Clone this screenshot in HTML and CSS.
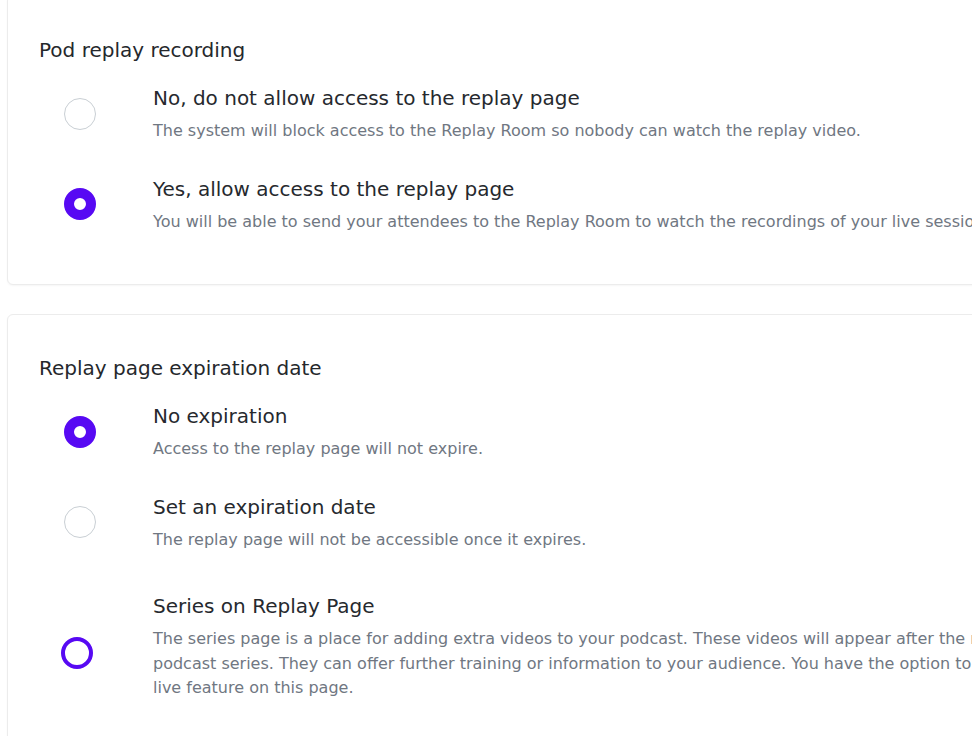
FILE: index.html
```html
<!DOCTYPE html>
<html lang="en">
<head>
<meta charset="utf-8">
<title>Replay settings</title>
<link rel="stylesheet" href="styles.css">
</head>
<body>
<main class="page">
  <section class="card card--first">
    <h2 class="card-title">Pod replay recording</h2>
    <div class="options">
      <label class="option">
        <span class="radio"></span>
        <span class="option-text">
          <span class="option-title">No, do not allow access to the replay page</span>
          <span class="option-desc">The system will block access to the Replay Room so nobody can watch the replay video.</span>
        </span>
      </label>
      <label class="option">
        <span class="radio radio--checked"></span>
        <span class="option-text">
          <span class="option-title">Yes, allow access to the replay page</span>
          <span class="option-desc">You will be able to send your attendees to the Replay Room to watch the recordings of your live sessions.</span>
        </span>
      </label>
    </div>
  </section>

  <section class="card card--second">
    <h2 class="card-title">Replay page expiration date</h2>
    <div class="options">
      <label class="option">
        <span class="radio radio--checked"></span>
        <span class="option-text">
          <span class="option-title">No expiration</span>
          <span class="option-desc">Access to the replay page will not expire.</span>
        </span>
      </label>
      <label class="option">
        <span class="radio"></span>
        <span class="option-text">
          <span class="option-title">Set an expiration date</span>
          <span class="option-desc">The replay page will not be accessible once it expires.</span>
        </span>
      </label>
      <label class="option option--series">
        <span class="radio radio--focus"></span>
        <span class="option-text">
          <span class="option-title">Series on Replay Page</span>
          <span class="option-desc">The series page is a place for adding extra videos to your podcast. These videos will appear after the main recording and complete the<br>podcast series. They can offer further training or information to your audience. You have the option to enable or disable the<br>live feature on this page.</span>
        </span>
      </label>
    </div>
  </section>
</main>
</body>
</html>
```

FILE: styles.css
```css
html, body {
  margin: 0;
  padding: 0;
  overflow: hidden;
  background: #ffffff;
}

body {
  font-family: "DejaVu Sans", "Open Sans", sans-serif;
  color: #2f3237;
}

.page {
  padding-left: 7px;
  width: 1400px;
}

.card {
  border: 1px solid #ececec;
  border-radius: 6px;
  box-shadow: 0 1px 2px rgba(0, 0, 0, 0.04);
  background: #fff;
  padding: 40px 31px 50px 31px;
}

.card--first {
  margin-top: -5px;
  padding-top: 40px;
}

.card--second {
  margin-top: 29px;
  padding-top: 39px;
  padding-bottom: 80px;
}

.card-title {
  margin: 0;
  font-size: 20px;
  line-height: 28px;
  font-weight: 400;
  color: #25282c;
}

.options {
  display: flex;
  flex-direction: column;
  gap: 31px;
  margin-top: 20px;
}

.option {
  display: flex;
  align-items: center;
  gap: 57px;
  padding-left: 25px;
}

.option--series {
  margin-top: 9px;
  padding-left: 22px;
  gap: 60px;
}

.radio {
  flex: none;
  width: 32px;
  height: 32px;
  box-sizing: border-box;
  border-radius: 50%;
  border: 1.5px solid #c9cfd4;
  background: #fff;
}

.radio--checked {
  border: 10px solid #5709f3;
}

.radio--focus {
  border: 4.5px solid #5709f3;
  margin-top: 14px;
}

.option-text {
  display: flex;
  flex-direction: column;
  gap: 7px;
  width: 1200px;
}

.option-title {
  font-size: 20px;
  line-height: 28px;
  color: #26292e;
}

.option-desc {
  font-size: 16px;
  line-height: 24.5px;
  color: #707782;
}
```
